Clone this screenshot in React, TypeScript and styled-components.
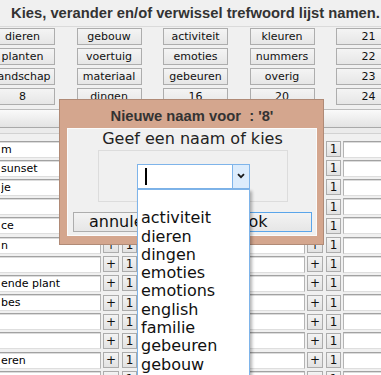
import React from 'react'
import styled, { createGlobalStyle } from 'styled-components'

const GlobalStyle = createGlobalStyle`
  html, body {
    margin: 0;
    padding: 0;
    background: #f0f0f0;
    overflow: hidden;
  }
  body {
    font-family: 'DejaVu Sans', Verdana, sans-serif;
  }
`

const listNames = [
  ['dieren', 'gebouw', 'activiteit', 'kleuren', '21'],
  ['planten', 'voertuig', 'emoties', 'nummers', '22'],
  ['landschap', 'materiaal', 'gebeuren', 'overig', '23'],
  ['8', 'dingen', '16', '20', '24'],
]

// visible tail of the first keyword column, one per row
const keywords = ['m', 'sunset', 'je', '', 'ce', 'n', '', 'ende plant', 'bes', '', '', 'eren', '']

const options = [
  '',
  'activiteit',
  'dieren',
  'dingen',
  'emoties',
  'emotions',
  'english',
  'familie',
  'gebeuren',
  'gebouw',
  'kleuren',
  'landschap',
]

const Screen = styled.div`
  position: relative;
  width: 381px;
  height: 375px;
  overflow: hidden;
  background: #f0f0f0;
`

const Page = styled.div`
  width: 612px;
  margin-left: -65px;
`

const TitleBar = styled.div`
  display: flex;
  border-bottom: 1px solid #dadada;
`

const Title = styled.h1`
  width: 411px;
  height: 26px;
  margin: 0 0 0 55px;
  font: bold 14.75px 'Liberation Sans', Arial, sans-serif;
  line-height: 26px;
  text-align: center;
  white-space: nowrap;
  color: #333;
`

const ListGrid = styled.div`
  display: grid;
  grid-template-columns: repeat(5, 65px);
  grid-auto-rows: 17px;
  column-gap: 21.5px;
  row-gap: 3px;
  margin: 1px 0 0 55px;
`

const ListButton = styled.button`
  box-sizing: border-box;
  height: 17px;
  padding: 0;
  border: 1px solid #adadad;
  background: linear-gradient(#f4f4f4, #e6e6e6);
  font: 11px 'DejaVu Sans', Verdana, sans-serif;
  line-height: 15px;
  color: #111;
  white-space: nowrap;
`

const HeaderBar = styled.div`
  height: 17px;
  margin-top: 4px;
  border-top: 1px solid #bcbcbc;
  border-bottom: 1px solid #a9a9a9;
  background: linear-gradient(#fafafa, #e3e3e3);
`

const HeaderGap = styled.div`
  height: 5px;
  border-bottom: 1px solid #d2d2d2;
  background: #ebebeb;
`

const Rows = styled.div`
  padding-top: 5.5px;
`

const Row = styled.div`
  display: flex;
  align-items: center;
  height: 19.2px;
`

const NameField = styled.input<{ $indent: number }>`
  box-sizing: border-box;
  flex: none;
  width: 166px;
  height: 17px;
  margin: 0;
  padding: 0 2px 0 ${(p) => p.$indent}px;
  border: 1px solid;
  border-color: #a2a2a2 #b4b4b4 #dedede #b4b4b4;
  box-shadow: inset 0 1px 0 #dcdcdc;
  background: #fff;
  font: 11px 'DejaVu Sans', Verdana, sans-serif;
  color: #000;
  outline: none;
`

const SmallButton = styled.button<{ $width: number; $before: number; $after: number }>`
  box-sizing: border-box;
  flex: none;
  width: ${(p) => p.$width}px;
  height: 16px;
  margin: 0 ${(p) => p.$after}px 0 ${(p) => p.$before}px;
  padding: 0;
  border: 1px solid #acacac;
  background: linear-gradient(#f3f3f3, #e2e2e2);
  font: 12px 'DejaVu Sans', Verdana, sans-serif;
  line-height: 14px;
  color: #111;
`

const Dialog = styled.div`
  position: absolute;
  left: 59px;
  top: 99px;
  z-index: 5;
  box-sizing: border-box;
  width: 265px;
  padding: 0 6px 8px 7px;
  border: 1px solid #b08a76;
  background: #d4a68e;
`

const DialogTitle = styled.div`
  height: 24px;
  padding-top: 4px;
  font: bold 14.75px 'Liberation Sans', Arial, sans-serif;
  line-height: 24px;
  text-align: center;
  white-space: pre;
  color: #333;
`

const Panel = styled.div`
  box-sizing: border-box;
  display: flex;
  flex-direction: column;
  width: 250px;
  padding: 1px 4px 3px 5px;
  border: 1px solid #fbfbfb;
  background: #f0f0f0;
`

const Prompt = styled.div`
  height: 18px;
  font-size: 16px;
  line-height: 18px;
  text-align: center;
  color: #222;
`

const ChoiceBox = styled.div`
  box-sizing: border-box;
  display: flex;
  align-items: center;
  justify-content: center;
  width: 190px;
  height: 52px;
  margin: 2px auto 0;
  border: 1px solid #dcdcdc;
`

const Combo = styled.div`
  position: relative;
  box-sizing: border-box;
  display: flex;
  width: 113px;
  height: 25px;
  margin-left: 2px;
  border: 1px solid #7eb4ea;
  background: #fff;
`

const ComboInput = styled.div`
  flex: 1;
  display: flex;
  align-items: center;
  padding-left: 7px;
`

const Caret = styled.span`
  width: 2px;
  height: 17px;
  background: #000;
`

const ComboArrow = styled.div`
  display: flex;
  align-items: center;
  justify-content: center;
  width: 16px;
  border-left: 1px solid #7eb4ea;
  background: #dcecfc;
`

const OptionList = styled.div`
  position: absolute;
  top: calc(100% + 1px);
  left: -1px;
  z-index: 6;
  box-sizing: border-box;
  width: 113px;
  padding-top: 1.5px;
  border: 1px solid #7eb4ea;
  background: #fff;
  box-shadow: 2px 2px 3px rgba(0, 0, 0, 0.3);
`

const Option = styled.div`
  height: 18.3px;
  padding-left: 3px;
  font-size: 16px;
  line-height: 18.3px;
  white-space: nowrap;
  color: #111;
`

const ButtonRow = styled.div`
  display: flex;
  gap: 6px;
  margin-top: 10px;
`

const DialogButton = styled.button<{ $primary?: boolean }>`
  box-sizing: border-box;
  flex: ${(p) => (p.$primary ? '1' : '0 0 125px')};
  height: 20px;
  padding: 0 0 0 ${(p) => (p.$primary ? 0 : 15)}px;
  border: 1px solid ${(p) => (p.$primary ? '#5aa5ea' : '#adadad')};
  background: linear-gradient(#f3f3f3, #e6e6e6);
  font: 16px 'DejaVu Sans', Verdana, sans-serif;
  line-height: 18px;
  text-align: ${(p) => (p.$primary ? 'center' : 'left')};
  color: #111;
`

const KeywordGroup = ({ value, indent }: { value: string; indent: number }) => (
  <>
    <NameField readOnly value={value} $indent={indent} />
    <SmallButton $width={16} $before={2} $after={0}>
      +
    </SmallButton>
    <SmallButton $width={15} $before={3} $after={2}>
      1
    </SmallButton>
  </>
)

const App = () => {
  return (
    <Screen>
      <GlobalStyle />
      <Page>
        <TitleBar>
          <Title>Kies, verander en/of verwissel trefwoord lijst namen.</Title>
        </TitleBar>
        <ListGrid>
          {listNames.flat().map((name, i) => (
            <ListButton key={'list' + i}>{name}</ListButton>
          ))}
        </ListGrid>
        <HeaderBar />
        <HeaderGap />
        <Rows>
          {keywords.map((word, i) => (
            <Row key={'row' + i}>
              <KeywordGroup value={word} indent={65} />
              <KeywordGroup value="" indent={2} />
              <KeywordGroup value="" indent={2} />
            </Row>
          ))}
        </Rows>
      </Page>

      <Dialog>
        <DialogTitle>{"Nieuwe naam voor\u00a0 : '8'"}</DialogTitle>
        <Panel>
          <Prompt>Geef een naam of kies</Prompt>
          <ChoiceBox>
            <Combo>
              <ComboInput>
                <Caret />
              </ComboInput>
              <ComboArrow>
                <svg width="8" height="6" viewBox="0 0 8 6">
                  <path d="M1 1.2 L4 4.2 L7 1.2" fill="none" stroke="#1a1a1a" strokeWidth="1.8" />
                </svg>
              </ComboArrow>
              <OptionList>
                {options.map((o, i) => (
                  <Option key={'opt' + i}>{o}</Option>
                ))}
              </OptionList>
            </Combo>
          </ChoiceBox>
          <ButtonRow>
            <DialogButton>annuleer</DialogButton>
            <DialogButton $primary>ok</DialogButton>
          </ButtonRow>
        </Panel>
      </Dialog>
    </Screen>
  )
}

export default App
